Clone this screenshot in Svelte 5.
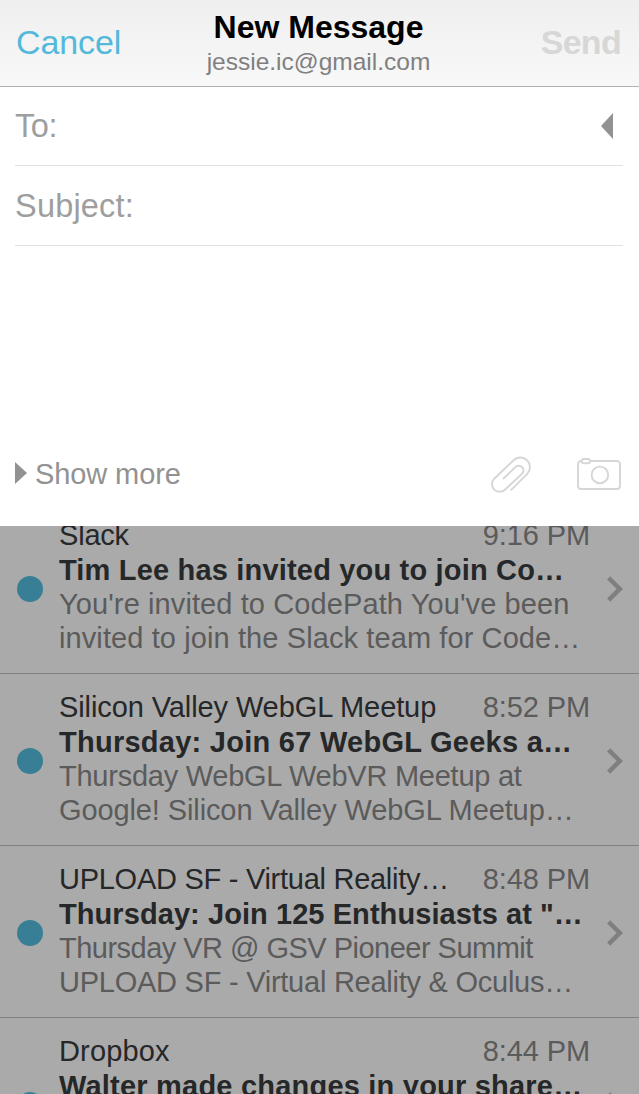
<script>
  const messages = [
    {
      sender: { text: 'Slack', track: -0.2 },
      time: '9:16 PM',
      subject: { text: 'Tim Lee has invited you to join Co…', track: 0.18 },
      preview: [
        { text: "You're invited to CodePath You've been", track: 0.1 },
        { text: 'invited to join the Slack team for Code…', track: 0.1 }
      ]
    },
    {
      sender: { text: 'Silicon Valley WebGL Meetup', track: -0.1 },
      time: '8:52 PM',
      subject: { text: 'Thursday: Join 67 WebGL Geeks a…', track: 0.26 },
      preview: [
        { text: 'Thursday WebGL WebVR Meetup at', track: -0.25 },
        { text: 'Google! Silicon Valley WebGL Meetup…', track: -0.11 }
      ]
    },
    {
      sender: { text: 'UPLOAD SF - Virtual Reality…', track: -0.27 },
      time: '8:48 PM',
      subject: { text: 'Thursday: Join 125 Enthusiasts at "…', track: 0.07 },
      preview: [
        { text: 'Thursday VR @ GSV Pioneer Summit', track: -0.52 },
        { text: 'UPLOAD SF - Virtual Reality & Oculus…', track: -0.25 }
      ]
    },
    {
      sender: { text: 'Dropbox', track: 0.15 },
      time: '8:44 PM',
      subject: { text: 'Walter made changes in your share…', track: 0.21 },
      preview: []
    }
  ];
</script>

<main>
  <section class="compose">
    <header>
      <button class="cancel">Cancel</button>
      <div class="heading">
        <h1>New Message</h1>
        <p>jessie.ic@gmail.com</p>
      </div>
      <button class="send">Send</button>
    </header>

    <div class="field to">
      <span class="to-label">To:</span>
      <svg width="12" height="26" viewBox="0 0 12 26"><path d="M12 0v26L0 13z" fill="#929292" /></svg>
    </div>
    <div class="field about"><span>Subject:</span></div>

    <div class="body"></div>

    <footer>
      <svg width="12" height="22" viewBox="0 0 12 22"><path d="M0 0v22l12-11z" fill="#929292" /></svg>
      <span class="more">Show more</span>
      <svg class="clip" width="42" height="38" viewBox="0 0 42 38" fill="none" stroke="#d6d6d6" stroke-width="1.900">
        <path d="M13 24L25.300 12.200A4.700 4.700 0 0 1 32.200 18.600L15.200 34.500A7.700 7.700 0 0 1 4.200 23.700L23.500 5.300A9.600 9.600 0 0 1 37.200 18.800L20.800 35.300" />
      </svg>
      <svg class="camera" width="44" height="34" viewBox="0 0 44 34" fill="none" stroke="#d6d6d6" stroke-width="1.900">
        <path d="M4.700 4H4a3 3 0 0 0-3 3v22a3 3 0 0 0 3 3h36a3 3 0 0 0 3-3V7a3 3 0 0 0-3-3H13" />
        <rect x="4.700" y="2" width="8.400" height="4.200" rx="2" />
        <circle cx="22.900" cy="17.900" r="8.300" />
      </svg>
    </footer>
  </section>

  <section class="inbox">
    <ul>
      {#each messages as m}
        <li>
          <span class="dot"></span>
          <div class="text">
            <div class="top">
              <span class="sender" style:letter-spacing="{m.sender.track}px">{m.sender.text}</span>
              <time>{m.time}</time>
            </div>
            <div class="subject" style:letter-spacing="{m.subject.track}px">{m.subject.text}</div>
            {#each m.preview as line}
              <div class="preview" style:letter-spacing="{line.track}px">{line.text}</div>
            {/each}
          </div>
          <svg class="chevron" width="16" height="26" viewBox="0 0 16 26" fill="none" stroke="#7f7f7f" stroke-width="4.500"><path d="M1.600 1.800L12.800 13L1.600 24.200" /></svg>
        </li>
      {/each}
    </ul>
  </section>
</main>

<style>
  :global(body) { margin: 0; }
  main {
    display: flex;
    flex-direction: column;
    width: 639px;
    height: 1094px;
    overflow: hidden;
    font-family: "Liberation Sans", Arial, sans-serif;
    white-space: nowrap;
  }
  svg { display: block; flex: none; }
  .compose {
    display: flex;
    flex-direction: column;
    flex: none;
    height: 526px;
    background: #fff;
  }
  header {
    display: flex;
    justify-content: space-between;
    box-sizing: border-box;
    height: 87px;
    padding: 0 18px 0 16px;
    background: linear-gradient(#efefef, #f8f8f8);
    border-bottom: 1px solid #b2b2b2;
  }
  button {
    width: 130px;
    height: 84px;
    padding: 0;
    border: 0;
    background: none;
    font: 34px/84px "Liberation Sans", Arial, sans-serif;
  }
  .cancel { color: #52b9db; text-align: left; letter-spacing: -0.1px; }
  .send { color: #d7d7d7; text-align: right; font-weight: 700; letter-spacing: -0.7px; }
  .heading { text-align: center; }
  h1 { margin: 8px 0 0; font-size: 32px; line-height: 39px; letter-spacing: 0; color: #000; }
  p { margin: 0; font-size: 24.5px; line-height: 30px; letter-spacing: 0; color: #808080; }
  .field {
    display: flex;
    align-items: center;
    justify-content: space-between;
    box-sizing: border-box;
    height: 80px;
    margin: 0 16px 0 15px;
    padding-right: 10px;
    border-bottom: 1px solid #e2e2e2;
    font-size: 32.5px;
    letter-spacing: 0.2px;
    color: #9e9e9e;
  }
  .to { height: 79px; }
  .about { padding-top: 2px; }
  .to-label { letter-spacing: -0.4px; }
  .body { flex: 1; }
  footer {
    display: flex;
    align-items: center;
    box-sizing: border-box;
    height: 74px;
    padding: 0 18px 32px 15px;
  }
  .more { flex: 1; margin: 2px 0 0 8px; font-size: 29px; letter-spacing: -0.1px; color: #929292; }
  .clip { margin-top: 2px; }
  .camera { margin: 2px 0 0 45px; }
  .inbox { flex: 1; overflow: hidden; background: #aaa; }
  ul { margin: -24px 0 0; padding: 0; list-style: none; }
  li {
    display: flex;
    box-sizing: border-box;
    height: 172px;
    padding-left: 17px;
    border-bottom: 1px solid #808080;
  }
  .dot { width: 26px; height: 26px; margin: 74px 16px 0 0; border-radius: 50%; background: #387f96; }
  .text { width: 531px; padding-top: 16px; font-size: 29px; line-height: 34px; color: #5b5b5b; }
  .top { display: flex; justify-content: space-between; height: 35px; }
  .sender, .subject { color: #252728; }
  time { letter-spacing: -0.1px; }
  .subject { font-weight: 700; }
  .chevron { margin: 74px 0 0 17px; }
</style>
